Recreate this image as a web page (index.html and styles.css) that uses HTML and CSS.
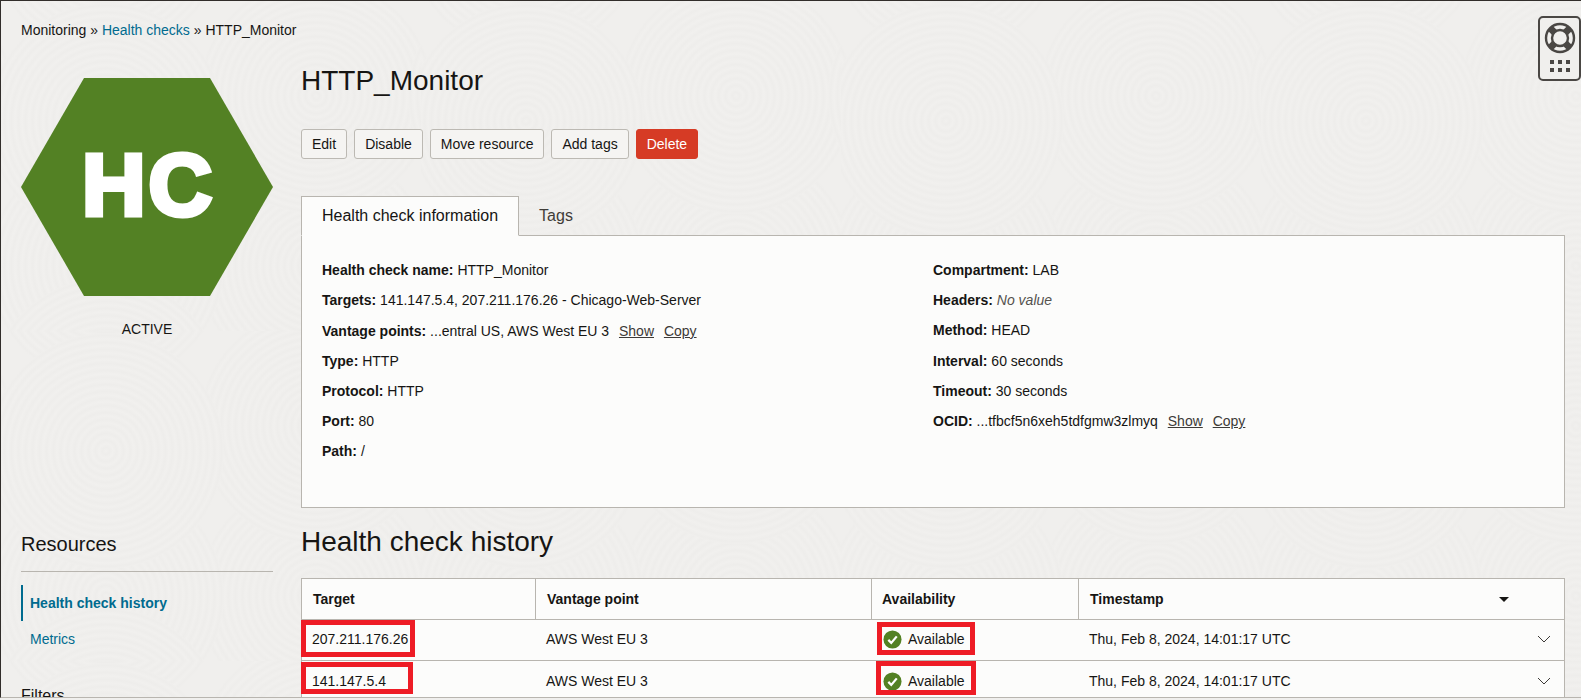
FILE: index.html
```html
<!DOCTYPE html>
<html lang="en">
<head>
<meta charset="utf-8">
<title>HTTP_Monitor</title>
<link rel="stylesheet" href="styles.css">
</head>
<body>
<div class="frame">
  <nav class="crumbs">Monitoring » <a class="link" href="#">Health checks</a> » HTTP_Monitor</nav>
  <div class="columns">
    <aside class="side">
      <div class="hex">HC</div>
      <div class="state">ACTIVE</div>
      <h2 class="res-title">Resources</h2>
      <ul class="res-nav">
        <li class="res-item res-item-on">Health check history</li>
        <li class="res-item">Metrics</li>
      </ul>
      <h3 class="filters">Filters</h3>
    </aside>
    <main class="main">
      <h1 class="title">HTTP_Monitor</h1>
      <div class="actions">
        <button class="btn">Edit</button>
        <button class="btn">Disable</button>
        <button class="btn">Move resource</button>
        <button class="btn">Add tags</button>
        <button class="btn btn-danger">Delete</button>
      </div>
      <div class="tabs">
        <div class="tab tab-on">Health check information</div>
        <div class="tab tab-off">Tags</div>
      </div>
      <section class="panel">
        <div class="col">
          <p class="row"><b>Health check name:</b> HTTP_Monitor</p>
          <p class="row"><b>Targets:</b> 141.147.5.4, 207.211.176.26 - Chicago-Web-Server</p>
          <p class="row row-gap"><b>Vantage points:</b> ...entral US, AWS West EU 3 <a class="act" href="#">Show</a> <a class="act" href="#">Copy</a></p>
          <p class="row"><b>Type:</b> HTTP</p>
          <p class="row"><b>Protocol:</b> HTTP</p>
          <p class="row"><b>Port:</b> 80</p>
          <p class="row"><b>Path:</b> /</p>
        </div>
        <div class="col">
          <p class="row"><b>Compartment:</b> LAB</p>
          <p class="row"><b>Headers:</b> <i class="none">No value</i></p>
          <p class="row"><b>Method:</b> HEAD</p>
          <p class="row row-gap"><b>Interval:</b> 60 seconds</p>
          <p class="row"><b>Timeout:</b> 30 seconds</p>
          <p class="row"><b>OCID:</b> ...tfbcf5n6xeh5tdfgmw3zlmyq <a class="act" href="#">Show</a> <a class="act" href="#">Copy</a></p>
        </div>
      </section>
      <h2 class="sub">Health check history</h2>
      <div class="tbl-wrap">
        <table class="tbl">
          <colgroup><col class="c1"><col class="c2"><col class="c3"><col></colgroup>
          <thead>
            <tr>
              <th>Target</th>
              <th>Vantage point</th>
              <th class="th-avail">Availability</th>
              <th><div class="split">Timestamp<span class="caret"></span></div></th>
            </tr>
          </thead>
          <tbody>
            <tr class="first">
              <td>207.211.176.26</td>
              <td>AWS West EU 3</td>
              <td><div class="avail"><svg class="ok" viewBox="0 0 20 20"><circle cx="10" cy="10" r="9.5"/><path d="M5.6 10.4l3.1 3.2 5.8-6.9"/></svg>Available</div></td>
              <td><div class="split">Thu, Feb 8, 2024, 14:01:17 UTC<svg class="chev" viewBox="0 0 14 8"><path d="M1 1l6 6 6-6"/></svg></div></td>
            </tr>
            <tr>
              <td>141.147.5.4</td>
              <td>AWS West EU 3</td>
              <td><div class="avail"><svg class="ok" viewBox="0 0 20 20"><circle cx="10" cy="10" r="9.5"/><path d="M5.6 10.4l3.1 3.2 5.8-6.9"/></svg>Available</div></td>
              <td><div class="split">Thu, Feb 8, 2024, 14:01:17 UTC<svg class="chev" viewBox="0 0 14 8"><path d="M1 1l6 6 6-6"/></svg></div></td>
            </tr>
          </tbody>
        </table>
        <span class="mark mark-a"></span>
        <span class="mark mark-b"></span>
        <span class="mark mark-c"></span>
        <span class="mark mark-d"></span>
      </div>
    </main>
  </div>
  <div class="help">
    <svg class="buoy" viewBox="0 0 32 32">
      <circle class="buoy-ring" cx="16" cy="16" r="14"/>
      <circle class="buoy-ring" cx="16" cy="16" r="8"/>
      <path class="buoy-band" d="M6.100 6.100l4.300 4.300M25.900 6.100l-4.300 4.300M6.100 25.900l4.300-4.300M25.900 25.900l-4.300-4.300"/>
    </svg>
    <div class="dots">
      <span class="dot"></span><span class="dot"></span><span class="dot"></span>
      <span class="dot"></span><span class="dot"></span><span class="dot"></span>
    </div>
  </div>
</div>
</body>
</html>
```

FILE: styles.css
```css
* { box-sizing: border-box; }

html, body {
  margin: 0;
  height: 700px;
  overflow: hidden;
  background: #f0efed;
}

body {
  font-family: "Liberation Sans", Arial, sans-serif;
  font-size: 14px;
  line-height: 20px;
  color: #161513;
}

.frame {
  position: relative;
  height: 698px;
  overflow: hidden;
  padding: 19px 0 0 20px;
  border-top: 1px solid #312d2a;
  border-left: 1px solid #312d2a;
  border-bottom: 1px solid #b8b5af;
  background-color: #f0efed;
  background-image: url("data:image/svg+xml,%3Csvg xmlns='http://www.w3.org/2000/svg' width='420' height='330'%3E%3Cdefs%3E%3CradialGradient id='g' gradientUnits='userSpaceOnUse' cx='0' cy='0' r='7' spreadMethod='repeat'%3E%3Cstop offset='0' stop-color='%23f1f0ee'/%3E%3Cstop offset='.5' stop-color='%23eeedeb'/%3E%3Cstop offset='1' stop-color='%23f1f0ee'/%3E%3C/radialGradient%3E%3Ccircle id='c' r='118' fill='url(%23g)'/%3E%3C/defs%3E%3Crect width='420' height='330' fill='%23f0efed'/%3E%3Cuse href='%23c' x='315' y='265'/%3E%3Cuse href='%23c' x='-105' y='265'/%3E%3Cuse href='%23c' x='105' y='-65'/%3E%3Cuse href='%23c' x='525' y='-65'/%3E%3Cuse href='%23c' x='105' y='265'/%3E%3Cuse href='%23c' x='315' y='95'/%3E%3Cuse href='%23c' x='-105' y='95'/%3E%3Cuse href='%23c' x='105' y='395'/%3E%3Cuse href='%23c' x='525' y='95'/%3E%3Cuse href='%23c' x='105' y='120'/%3E%3C/svg%3E");
}

.crumbs {
  height: 20px;
  margin-bottom: 25px;
}

.link { color: #006b8f; text-decoration: none; }

.columns { display: flex; gap: 28px; }

.side { flex: 0 0 252px; padding-top: 13px; }

.hex {
  display: flex;
  align-items: center;
  justify-content: center;
  height: 218px;
  padding: 0 0 4px 3px;
  background: #538124;
  clip-path: polygon(25% 0, 75% 0, 100% 50%, 75% 100%, 25% 100%, 0 50%);
  color: #fff;
  font-size: 88px;
  font-weight: 700;
  letter-spacing: 3px;
  -webkit-text-stroke: 5px #fff;
}

.state { margin-top: 23px; text-align: center; }

.res-title {
  margin: 193px 0 13px;
  padding-bottom: 15px;
  border-bottom: 1px solid #b8b5af;
  font-size: 20px;
  line-height: 24px;
  font-weight: 400;
}

.res-nav { margin: 0; padding: 0; list-style: none; }

.res-item {
  padding: 8px 0 8px 9px;
  color: #006b8f;
  line-height: 20px;
}

.res-item-on {
  border-left: 2px solid #006b8f;
  padding-left: 7px;
  font-weight: 700;
}

.filters {
  margin: 29px 0 0;
  font-size: 16px;
  line-height: 20px;
  font-weight: 400;
}

.main { flex: 0 0 1264px; }

.title {
  margin: 0 0 32px;
  font-size: 28px;
  line-height: 32px;
  font-weight: 400;
}

.actions { display: flex; gap: 7px; margin-bottom: 37px; }

.btn {
  height: 30px;
  padding: 0 10px;
  border: 1px solid #bcb9b3;
  border-radius: 3px;
  background: #f5f4f2;
  color: #161513;
  font: inherit;
}

.btn-danger {
  border-color: #d63b25;
  background: #d63b25;
  color: #fff;
}

.tabs { display: flex; margin-bottom: -1px; }

.tab {
  padding: 9px 20px;
  border: 1px solid transparent;
  font-size: 16px;
  line-height: 20px;
}

.tab-off { margin-left: -1px; color: #3f3c38; }

.tab-on {
  position: relative;
  z-index: 1;
  border-color: #b8b5af;
  border-bottom-color: #fcfcfb;
  background: #fcfcfb;
}

.panel {
  display: grid;
  grid-template-columns: 611px 1fr;
  height: 273px;
  padding: 24px 20px 0;
  border: 1px solid #b8b5af;
  background: #fcfcfb;
}

.row { margin: 0 0 10px; white-space: nowrap; }
.row-gap { margin-top: 11px; }

.act { margin-left: 6px; color: #3d3a37; }

.none { color: #55524e; }

.sub {
  margin: 18px 0 20px;
  font-size: 28px;
  line-height: 32px;
  font-weight: 400;
}

.tbl-wrap {
  position: relative;
  border: 1px solid #b8b5af;
  border-bottom: 0;
  background: #fcfcfb;
}

.tbl {
  width: 100%;
  border-collapse: separate;
  border-spacing: 0;
  table-layout: fixed;
}

.c1 { width: 234px; }
.c2 { width: 336px; }
.c3 { width: 207px; }

.tbl th, .tbl td {
  height: 41px;
  padding: 0 10px;
  border-bottom: 1px solid #b8b5af;
  text-align: left;
}

.tbl th { padding: 0 11px; border-right: 1px solid #b8b5af; font-weight: 700; }
.tbl th.th-avail { padding-left: 10px; }
.tbl th:last-child { border-right: 0; }

.first td { padding-bottom: 2px; }

.split { display: flex; align-items: center; justify-content: space-between; }

.caret {
  width: 0;
  height: 0;
  margin-right: 44px;
  border-left: 5px solid transparent;
  border-right: 5px solid transparent;
  border-top: 5px solid #161513;
}

.chev {
  width: 14px;
  height: 8px;
  margin-right: 3px;
  fill: none;
  stroke: #3d3a37;
  stroke-width: 1;
}

.avail { display: flex; align-items: center; gap: 6px; margin-left: 1px; }

.ok { width: 19px; height: 19px; }
.ok circle { fill: #538124; }
.ok path { fill: none; stroke: #fff; stroke-width: 2.4; }

.mark {
  position: absolute;
  border: 5px solid #ee1c25;
}

.mark-a { left: -1px; top: 41px; width: 114px; height: 37px; }
.mark-b { left: -1px; top: 83px; width: 112px; height: 32px; }
.mark-c { left: 575px; top: 43px; width: 98px; height: 33px; }
.mark-d { left: 574px; top: 82px; width: 100px; height: 34px; }

.help {
  position: absolute;
  top: 15px;
  left: 1537px;
  display: flex;
  flex-direction: column;
  align-items: center;
  width: 43px;
  height: 65px;
  padding-top: 4px;
  border: 2px solid #4a4744;
  border-radius: 5px;
  background: #f0efed;
}

.buoy { flex: none; width: 32px; height: 32px; }
.buoy-ring { fill: none; stroke: #4a4744; stroke-width: 2.4; }
.buoy-band { fill: none; stroke: #4a4744; stroke-width: 7; }

.dots {
  display: grid;
  grid-template-columns: repeat(3, 4px);
  gap: 4px;
  margin-top: 6px;
}

.dot { width: 4px; height: 4px; background: #4a4744; }
```
